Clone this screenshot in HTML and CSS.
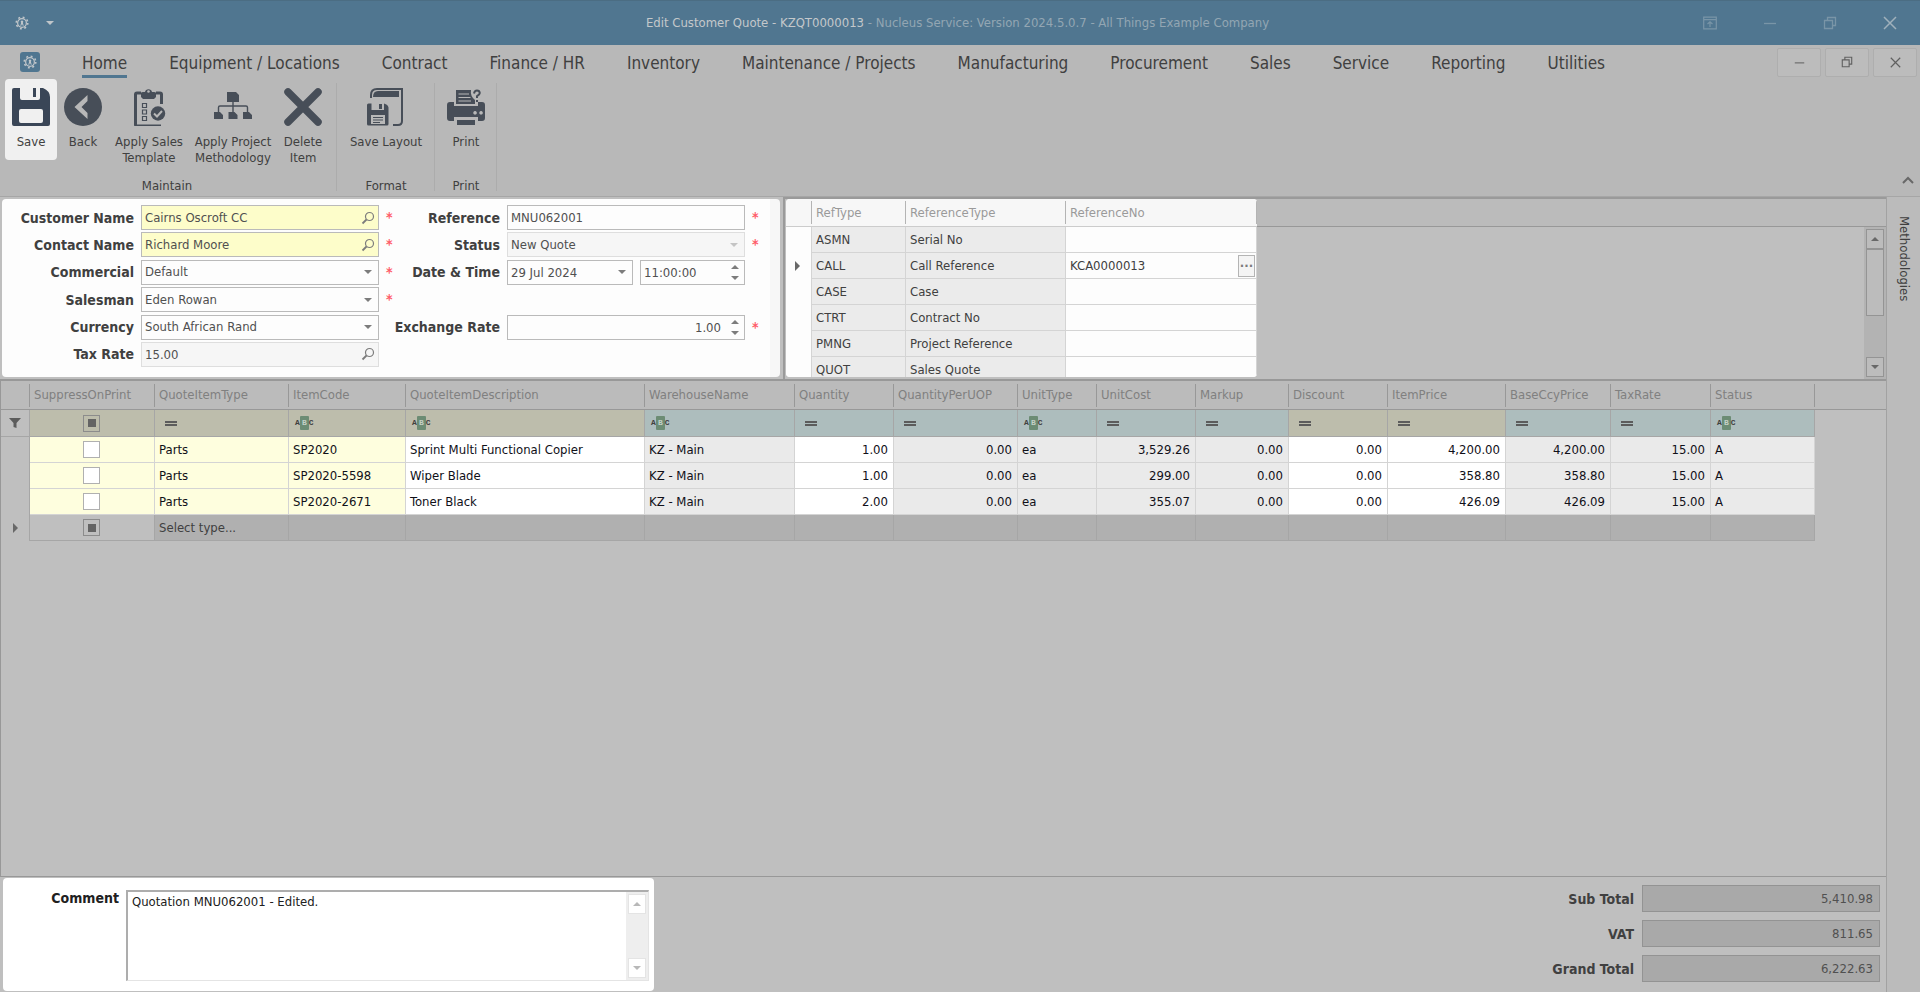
FILE: index.html
```html
<!DOCTYPE html>
<html lang="en">
<head>
  <meta charset="UTF-8">
  <meta name="viewport" content="width=device-width, initial-scale=1.0">
  <title>Edit Customer Quote - KZQT0000013</title>
  <link rel="stylesheet" href="styles.css">
</head>
<body>
  <svg class="defs" width="0" height="0" aria-hidden="true">
    <symbol id="gear" viewBox="0 0 16 16">
      <circle cx="8" cy="8" r="5" fill="none" stroke="currentColor" stroke-width="1.4"/>
      <circle cx="8" cy="8" r="6.6" fill="none" stroke="currentColor" stroke-width="1.8" stroke-dasharray="2.2 2.98"/>
      <path d="M8 5a1.5 1.5 0 0 1 1 2.6L10 11H9L8 9l-1 2H6l1-3.4A1.5 1.5 0 0 1 8 5z" fill="currentColor"/>
    </symbol>
    <symbol id="search" viewBox="0 0 14 14">
      <circle cx="8.5" cy="5.5" r="4" fill="none" stroke="currentColor" stroke-width="1.2"/>
      <path d="M5.5 8.5 1.5 12.5" stroke="currentColor" stroke-width="1.8"/>
    </symbol>
    <symbol id="restore" viewBox="0 0 14 14">
      <path d="M1.5 4.5h8v8h-8zM4.5 4.5v-3h8v8h-3" fill="none" stroke="currentColor" stroke-width="1.3"/>
    </symbol>
    <symbol id="close" viewBox="0 0 14 14">
      <path d="M1 1l12 12M13 1 1 13" stroke="currentColor" stroke-width="1.5"/>
    </symbol>
    <symbol id="minimize" viewBox="0 0 14 14">
      <path d="M1 7.5h12" stroke="currentColor" stroke-width="1.3"/>
    </symbol>
  </svg>

  <header class="titlebar">
    <div class="quick">
      <svg width="14" height="14"><use href="#gear"/></svg>
      <i class="down"></i>
    </div>
    <div class="title"><b>Edit Customer Quote - KZQT0000013</b> - Nucleus Service: Version 2024.5.0.7 - All Things Example Company</div>
    <div class="winbtns">
      <button aria-label="Ribbon display"><svg width="14" height="14" viewBox="0 0 14 14"><path d="M.7 1.2h12.6v11.6H.7zM.7 3.7h12.6M7 11V6M4.5 8 7 5.7 9.500 8" fill="none" stroke="currentColor" stroke-width="1.2"/></svg></button>
      <button aria-label="Minimize"><svg width="14" height="14"><use href="#minimize"/></svg></button>
      <button aria-label="Restore"><svg width="14" height="14"><use href="#restore"/></svg></button>
      <button class="bright" aria-label="Close"><svg width="14" height="14"><use href="#close"/></svg></button>
    </div>
  </header>

  <nav class="menu">
    <span class="app"><svg width="14" height="14"><use href="#gear"/></svg></span>
    <a href="#" class="active">Home</a>
    <a href="#">Equipment / Locations</a>
    <a href="#">Contract</a>
    <a href="#">Finance / HR</a>
    <a href="#">Inventory</a>
    <a href="#">Maintenance / Projects</a>
    <a href="#">Manufacturing</a>
    <a href="#">Procurement</a>
    <a href="#">Sales</a>
    <a href="#">Service</a>
    <a href="#">Reporting</a>
    <a href="#">Utilities</a>
    <div class="docbtns">
      <button aria-label="Minimize document"><svg width="11" height="11"><use href="#minimize"/></svg></button>
      <button aria-label="Restore document"><svg width="12" height="12"><use href="#restore"/></svg></button>
      <button aria-label="Close document"><svg width="11" height="11"><use href="#close"/></svg></button>
    </div>
  </nav>

  <div class="ribbon">
    <section class="group">
      <div class="tools">
        <button class="tool lit">
          <svg width="38" height="38" viewBox="0 0 38 38"><path fill="currentColor" fill-rule="evenodd" d="M2 0h6v10q0 2 2 2h16q2 0 2-2V0h3q7 3 7 9v27q0 2-2 2H2q-2 0-2-2V2q0-2 2-2zM9 21q-2 0-2 2v10q0 2 2 2h20q2 0 2-2V23q0-2-2-2zM21 0h3v9h-3z"/></svg>
          Save
        </button>
        <button class="tool">
          <svg width="38" height="38" viewBox="0 0 38 38"><circle cx="19" cy="19" r="19" fill="currentColor"/><path d="M23.500 7v6l-6 6 6 6v6L10.500 19z" fill="#b8b8b8"/></svg>
          Back
        </button>
        <button class="tool wide">
          <svg width="38" height="38" viewBox="0 0 38 38"><path d="M11 5H7q-1.500 0-1.500 1.500v30q0 1.500 1.500 1.500h24M26 5h4q1.500 0 1.500 1.500V16" fill="none" stroke="currentColor" stroke-width="3"/><path d="M11 9V5q0-1 2-1h2a3.600 3.600 0 0 1 7 0h2q2 0 2 1v4l-2 2H13z" fill="currentColor"/><circle cx="18.500" cy="3.500" r="1.300" fill="#b8b8b8"/><path d="M12.500 15.500h4v4h-4zM12.500 22h4v4h-4zM12.500 28.500h4v4h-4z" fill="none" stroke="currentColor" stroke-width="1.200"/><circle cx="28" cy="25.500" r="7.200" fill="currentColor"/><path d="M24 25.500l3 3 5-5.500" fill="none" stroke="#b8b8b8" stroke-width="2"/></svg>
          Apply Sales<br>Template
        </button>
        <button class="tool wider">
          <svg width="40" height="38" viewBox="0 0 40 38"><path d="M14 4h9l3 3v7H14zM1 24h6l3 3v4H1zM15.500 24h6l3 3v4h-9zM30 24h6l3 3v4h-9z" fill="currentColor"/><path d="M20 14v10M5.500 24v-4.500q0-1.500 1.500-1.500h26q1.500 0 1.500 1.500V24" fill="none" stroke="currentColor" stroke-width="1.400"/></svg>
          Apply Project<br>Methodology
        </button>
        <button class="tool">
          <svg width="38" height="38" viewBox="0 0 38 38"><path d="M4 4l30 30M34 4 4 34" stroke="currentColor" stroke-width="7.500" stroke-linecap="round"/></svg>
          Delete<br>Item
        </button>
      </div>
      <h2>Maintain</h2>
    </section>
    <section class="group">
      <div class="tools">
        <button class="tool wider">
          <svg width="38" height="38" viewBox="0 0 38 38"><path d="M4 10V7q0-6 6-6h25v32q0 4-4 4h-5" fill="none" stroke="currentColor" stroke-width="2"/><path d="M6 9q0-6 5-6h21v6z" fill="currentColor"/><path fill="currentColor" fill-rule="evenodd" d="M1.500 15.500h3V22H17v-6.500q4 1 4.500 4V36q0 1.500-1.500 1.500H1.500Q0 37.500 0 36V17q0-1.500 1.500-1.500zM12 16h3v5h-3zM4 27v9h14v-9z"/><path d="M6 29.500h10M6 32h10M6 34.500h7" stroke="currentColor" stroke-width="1.100"/></svg>
          Save Layout
        </button>
      </div>
      <h2>Format</h2>
    </section>
    <section class="group">
      <div class="tools">
        <button class="tool">
          <svg width="38" height="38" viewBox="0 0 38 38"><path d="M9 2h15q-1 6 4 10v4H9z" fill="currentColor"/><path d="M11.500 6H22M11.500 9.500h12M11.500 13H24" stroke="#b8b8b8" stroke-width="1"/><path fill="currentColor" fill-rule="evenodd" d="M3 14h4v4h24v-4h4q3 0 3 3v13q0 3-3 3h-4v-4H7v4H3q-3 0-3-3V17q0-3 3-3zM28 23a1.800 1.800 0 1 0 .1 0zM34 23a1.800 1.800 0 1 0 .1 0z"/><path d="M10 32h18v5H10z" fill="currentColor"/><path d="M27 5.500q.5-3 3-3t2.800 2.500q0 1.500-2.800 3.200V10M30 12v2" fill="none" stroke="currentColor" stroke-width="2"/></svg>
          Print
        </button>
      </div>
      <h2>Print</h2>
    </section>
    <button class="collapse" aria-label="Collapse ribbon"><svg width="12" height="8" viewBox="0 0 12 8"><path d="M1 7l5-5 5 5" fill="none" stroke="currentColor" stroke-width="2"/></svg></button>
  </div>

  <main class="workspace">
    <div class="content">
      <div class="upper">
        <form class="details">
          <label for="customer">Customer Name</label>
          <div class="field key"><input id="customer" value="Cairns Oscroft CC"><svg width="14" height="14"><use href="#search"/></svg></div>
          <span class="req">*</span>
          <label for="reference">Reference</label>
          <div class="field"><input id="reference" value="MNU062001"></div>
          <span class="req">*</span>

          <label for="contact">Contact Name</label>
          <div class="field key"><input id="contact" value="Richard Moore"><svg width="14" height="14"><use href="#search"/></svg></div>
          <span class="req">*</span>
          <label for="status">Status</label>
          <div class="field off"><select id="status" disabled><option>New Quote</option></select><i class="down"></i></div>
          <span class="req">*</span>

          <label for="commercial">Commercial</label>
          <div class="field"><select id="commercial"><option>Default</option></select><i class="down"></i></div>
          <span class="req">*</span>
          <label for="date">Date &amp; Time</label>
          <div class="pair">
            <div class="field date"><input id="date" value="29 Jul 2024"><i class="down"></i></div>
            <div class="field"><input aria-label="Time" value="11:00:00"><span class="spin"><i class="up"></i><i class="down"></i></span></div>
          </div>
          <span></span>

          <label for="salesman">Salesman</label>
          <div class="field"><select id="salesman"><option>Eden Rowan</option></select><i class="down"></i></div>
          <span class="req">*</span>
          <span></span><span></span><span></span>

          <label for="currency">Currency</label>
          <div class="field"><select id="currency"><option>South African Rand</option></select><i class="down"></i></div>
          <span></span>
          <label for="rate">Exchange Rate</label>
          <div class="field"><input id="rate" class="num" value="1.00"><span class="spin"><i class="up"></i><i class="down"></i></span></div>
          <span class="req">*</span>

          <label for="tax">Tax Rate</label>
          <div class="field off"><input id="tax" value="15.00" readonly><svg width="14" height="14"><use href="#search"/></svg></div>
        </form>

        <div class="refs">
          <div class="refgrid">
            <table class="reftable">
              <colgroup><col class="r0"><col class="r1"><col class="r2"><col class="r3"></colgroup>
              <thead>
                <tr><th></th><th>RefType</th><th>ReferenceType</th><th>ReferenceNo</th></tr>
              </thead>
              <tbody>
                <tr><td></td><td>ASMN</td><td>Serial No</td><td></td></tr>
                <tr><td><i class="right"></i></td><td>CALL</td><td>Call Reference</td><td><div class="lookup">KCA0000013<button aria-label="Browse">···</button></div></td></tr>
                <tr><td></td><td>CASE</td><td>Case</td><td></td></tr>
                <tr><td></td><td>CTRT</td><td>Contract No</td><td></td></tr>
                <tr><td></td><td>PMNG</td><td>Project Reference</td><td></td></tr>
                <tr><td></td><td>QUOT</td><td>Sales Quote</td><td></td></tr>
              </tbody>
            </table>
          </div>
          <div class="refside">
            <div class="headfill"></div>
            <div class="scroll">
              <button aria-label="Scroll up"><i class="up"></i></button>
              <span class="thumb"></span>
              <span class="track"></span>
              <button aria-label="Scroll down"><i class="down"></i></button>
            </div>
          </div>
        </div>
      </div>

      <div class="items">
        <table class="quote">
          <colgroup>
            <col class="c0"><col class="c1"><col class="c2"><col class="c3"><col class="c4"><col class="c5"><col class="c6"><col class="c7">
            <col class="c8"><col class="c9"><col class="c10"><col class="c11"><col class="c12"><col class="c13"><col class="c14"><col class="c15"><col>
          </colgroup>
          <thead>
            <tr>
              <th></th><th>SuppressOnPrint</th><th>QuoteItemType</th><th>ItemCode</th><th>QuoteItemDescription</th><th>WarehouseName</th><th>Quantity</th><th>QuantityPerUOP</th>
              <th>UnitType</th><th>UnitCost</th><th>Markup</th><th>Discount</th><th>ItemPrice</th><th>BaseCcyPrice</th><th>TaxRate</th><th>Status</th><th></th>
            </tr>
          </thead>
          <tbody>
            <tr class="filter">
              <td><svg width="12" height="12" viewBox="0 0 12 12"><path d="M0 1h12L7.500 6v5l-3-1V6z" fill="currentColor"/></svg></td>
              <td class="y mid"><span class="mixed"></span></td>
              <td class="y"><i class="eq"></i></td>
              <td class="y"><span class="abc">A<b>B</b>C</span></td>
              <td class="y"><span class="abc">A<b>B</b>C</span></td>
              <td><span class="abc">A<b>B</b>C</span></td>
              <td><i class="eq"></i></td>
              <td><i class="eq"></i></td>
              <td><span class="abc">A<b>B</b>C</span></td>
              <td><i class="eq"></i></td>
              <td><i class="eq"></i></td>
              <td class="y"><i class="eq"></i></td>
              <td class="y"><i class="eq"></i></td>
              <td><i class="eq"></i></td>
              <td><i class="eq"></i></td>
              <td><span class="abc">A<b>B</b>C</span></td>
              <td></td>
            </tr>
            <tr class="row">
              <td></td><td class="y mid"><input type="checkbox" aria-label="Suppress SP2020"></td><td class="y">Parts</td><td class="y">SP2020</td><td class="w">Sprint Multi Functional Copier</td><td>KZ - Main</td><td class="w n">1.00</td><td class="n">0.00</td>
              <td>ea</td><td class="n">3,529.26</td><td class="n">0.00</td><td class="w n">0.00</td><td class="w n">4,200.00</td><td class="n">4,200.00</td><td class="n">15.00</td><td>A</td><td></td>
            </tr>
            <tr class="row">
              <td></td><td class="y mid"><input type="checkbox" aria-label="Suppress SP2020-5598"></td><td class="y">Parts</td><td class="y">SP2020-5598</td><td class="w">Wiper Blade</td><td>KZ - Main</td><td class="w n">1.00</td><td class="n">0.00</td>
              <td>ea</td><td class="n">299.00</td><td class="n">0.00</td><td class="w n">0.00</td><td class="w n">358.80</td><td class="n">358.80</td><td class="n">15.00</td><td>A</td><td></td>
            </tr>
            <tr class="row">
              <td></td><td class="y mid"><input type="checkbox" aria-label="Suppress SP2020-2671"></td><td class="y">Parts</td><td class="y">SP2020-2671</td><td class="w">Toner Black</td><td>KZ - Main</td><td class="w n">2.00</td><td class="n">0.00</td>
              <td>ea</td><td class="n">355.07</td><td class="n">0.00</td><td class="w n">0.00</td><td class="w n">426.09</td><td class="n">426.09</td><td class="n">15.00</td><td>A</td><td></td>
            </tr>
            <tr class="new">
              <td><i class="right"></i></td><td class="mid"><span class="mixed"></span></td><td>Select type...</td><td></td><td></td><td></td><td></td><td></td>
              <td></td><td></td><td></td><td></td><td></td><td></td><td></td><td></td><td></td>
            </tr>
          </tbody>
        </table>
      </div>

      <footer class="lower">
        <div class="comment">
          <label for="comment">Comment</label>
          <div class="memo">
            <textarea id="comment">Quotation MNU062001 - Edited.</textarea>
            <div class="scroll pale">
              <button aria-label="Scroll comment up"><i class="up"></i></button>
              <span class="track"></span>
              <button aria-label="Scroll comment down"><i class="down"></i></button>
            </div>
          </div>
        </div>
        <div class="totals">
          <label for="sub">Sub Total</label><input id="sub" value="5,410.98" readonly>
          <label for="vat">VAT</label><input id="vat" value="811.65" readonly>
          <label for="grand">Grand Total</label><input id="grand" value="6,222.63" readonly>
        </div>
      </footer>
    </div>
    <aside class="dock"><a href="#">Methodologies</a></aside>
  </main>
</body>
</html>
```
FILE: styles.css
```css
* {
  box-sizing: border-box;
}

body {
  margin: 0;
  height: 100vh;
  display: flex;
  flex-direction: column;
  overflow: hidden;
  background: #bfbfbf;
  color: #404040;
  font-family: Tahoma, "DejaVu Sans Condensed", "Noto Sans", sans-serif;
  font-size: 13px;
  line-height: 16px;
}

button, input, select, textarea {
  font: inherit;
  color: inherit;
  margin: 0;
  padding: 0;
  border: none;
  border-radius: 0;
  background: none;
  outline: none;
}

a {
  color: inherit;
  text-decoration: none;
}

label {
  font-size: 14px;
  font-weight: bold;
  white-space: nowrap;
}

svg {
  flex: none;
}

.defs {
  position: absolute;
}

/* small arrows */
.down, .up, .right {
  flex: none;
  display: inline-block;
  width: 0;
  height: 0;
  border: 4px solid transparent;
}

.down {
  border-top-color: currentColor;
  border-bottom: none;
}

.up {
  border-bottom-color: currentColor;
  border-top: none;
}

.right {
  border-width: 5px;
  border-left-color: #686868;
  border-right: none;
}

/* title bar */
.titlebar {
  flex: none;
  display: flex;
  align-items: center;
  height: 45px;
  background: #507690;
  border-top: 1px solid #4b6d83;
  color: #93a6b3;
}

.quick {
  flex: 1;
  display: flex;
  align-items: center;
  gap: 17px;
  padding-left: 15px;
  color: #c0c6ca;
}

.title {
  padding-right: 20px;
  white-space: nowrap;
}

.title b {
  font-weight: normal;
  color: #c4c8cb;
}

.winbtns {
  flex: 1;
  display: flex;
  justify-content: flex-end;
  color: #7995a7;
}

.winbtns button {
  width: 60px;
  height: 44px;
  display: flex;
  align-items: center;
  justify-content: center;
}

.winbtns .bright {
  color: #a0b1bc;
}

/* menu */
.menu {
  flex: none;
  display: flex;
  align-items: center;
  gap: 42px;
  height: 34px;
  padding: 0 3px 0 20px;
  background: #b8b8b8;
  font-size: 17px;
}

.menu a {
  height: 32px;
  line-height: 34px;
  white-space: nowrap;
}

.menu .active {
  border-bottom: 3px solid #507690;
}

.app {
  display: flex;
  align-items: center;
  justify-content: center;
  width: 20px;
  height: 20px;
  border-radius: 3px;
  background: #507690;
  color: #c0c6ca;
}

.docbtns {
  margin-left: auto;
  display: flex;
  gap: 4px;
}

.docbtns button {
  width: 44px;
  height: 29px;
  display: flex;
  align-items: center;
  justify-content: center;
  background: #bcbcbc;
  border: 1px solid #aeaeae;
  border-radius: 2px;
  color: #606060;
}

/* ribbon */
.ribbon {
  flex: none;
  display: flex;
  height: 118px;
  padding-left: 5px;
  background: #b8b8b8;
  border-bottom: 1px solid #a6a6a6;
}

.group {
  display: flex;
  flex-direction: column;
  justify-content: space-between;
  padding: 0 5px 2px;
  background: linear-gradient(#acacac, #acacac) right 4px / 1px 108px no-repeat;
}

.group:first-child {
  padding: 0 8px 2px 0;
}

.group h2 {
  margin: 0;
  font-size: 13px;
  font-weight: normal;
  text-align: center;
}

.tools {
  display: flex;
}

.tool {
  display: flex;
  flex-direction: column;
  align-items: center;
  width: 52px;
  height: 81px;
  padding-top: 9px;
  white-space: nowrap;
}

.tool svg {
  color: #474e58;
  margin-bottom: 8px;
}

.tool.wide {
  width: 80px;
}

.tool.wider {
  width: 88px;
}

.tool.lit {
  background: #f0f0f0;
  border-radius: 4px;
}

.tool.lit svg {
  color: #3a4657;
}

.collapse {
  align-self: flex-end;
  margin: 0 6px 8px auto;
  color: #686868;
}

/* workspace */
.workspace {
  flex: 1;
  display: flex;
  min-height: 0;
}

.content {
  flex: 1;
  min-width: 0;
  display: flex;
  flex-direction: column;
}

.dock {
  width: 34px;
  padding-top: 19px;
  display: flex;
  justify-content: center;
  background: #bbbbbb;
  border-left: 1px solid #a2a2a2;
}

.dock a {
  writing-mode: vertical-rl;
}

.upper {
  flex: none;
  display: flex;
  height: 182px;
}

.details {
  flex: none;
  width: 778px;
  margin: 2px 3px 2px 2px;
  padding: 6px 0 10px 14px;
  display: grid;
  grid-template-columns: 118px 238px 10px 97px 238px 10px;
  grid-auto-rows: 25px;
  column-gap: 7px;
  align-content: space-between;
  align-items: center;
  background: linear-gradient(#f7f7f7, #f7f7f7) right / 10px 100% no-repeat #fdfdfd;
  border-radius: 4px;
}

.details label {
  justify-self: end;
}

.field {
  display: flex;
  align-items: center;
  height: 25px;
  min-width: 0;
  padding: 0 3px;
  background: #fdfdfd;
  border: 1px solid #bababa;
  color: #505050;
}

.field input, .field select {
  flex: 1;
  min-width: 0;
  height: 100%;
  appearance: none;
  opacity: 1;
}

.field svg {
  color: #7c7c7c;
}

.field > .down {
  margin-right: 3px;
  color: #7c7c7c;
}

.field.key {
  background: #fdfdca;
}

.field.off {
  background: #f6f6f6;
  border-color: #dedede;
}

.field.off .down {
  color: #c4c4c4;
}

.field .num {
  text-align: right;
}

.pair {
  display: flex;
  gap: 7px;
}

.pair .field {
  flex: 1;
}

.pair .date {
  flex: none;
  width: 126px;
}

.spin {
  display: flex;
  flex-direction: column;
  gap: 7px;
  padding: 0 2px 0 10px;
  color: #7c7c7c;
}

.req {
  align-self: start;
  color: #ff5c68;
  font-size: 14px;
  font-weight: bold;
  line-height: 24px;
}

/* references grid */
.refs {
  flex: 1;
  min-width: 0;
  display: flex;
  border: solid #9a9a9a;
  border-width: 2px 0 0 2px;
}

.refgrid {
  flex: none;
  width: 471px;
  margin: 0 0 2px 1px;
  overflow: hidden;
  background: #fdfdfd;
  border-radius: 4px;
}

table {
  table-layout: fixed;
  border-collapse: separate;
  border-spacing: 0;
}

th, td {
  padding: 0 5px 0 4px;
  font-weight: normal;
  text-align: left;
  white-space: nowrap;
}

.reftable {
  width: 471px;
}

.r0 { width: 26px; }
.r1 { width: 94px; }
.r2 { width: 160px; }
.r3 { width: 191px; }

.reftable th {
  height: 28px;
  background: linear-gradient(#b4b4b4, #b4b4b4) right center / 1px 23px no-repeat #f7f7f7;
  border-bottom: 1px solid #cccccc;
  color: #9a9a9a;
}

.reftable td {
  height: 26px;
  background: #ebebeb;
  border-right: 1px solid #d4d4d4;
  border-bottom: 1px solid #d4d4d4;
}

.reftable td:first-child {
  padding: 0 0 0 9px;
  background: #fdfdfd;
  border-bottom: none;
  line-height: 10px;
}

.reftable td:last-child {
  padding-right: 1px;
  background: #fdfdfd;
}

.lookup {
  display: flex;
  align-items: center;
  justify-content: space-between;
}

.lookup button {
  width: 17px;
  height: 22px;
  background: #f4f4f4;
  border: 1px solid #b4b4b4;
  font-weight: bold;
  color: #7c7c7c;
}

.refside {
  flex: 1;
  display: flex;
  flex-direction: column;
}

.headfill {
  height: 28px;
  background: #bbbbbb;
  border-bottom: 1px solid #989898;
}

.scroll {
  flex: 1;
  align-self: flex-end;
  display: flex;
  flex-direction: column;
  width: 22px;
  padding: 2px;
  background: #b3b3b3;
  color: #686868;
}

.scroll button {
  height: 20px;
  display: flex;
  align-items: center;
  justify-content: center;
  background: #bcbcbc;
  border: 1px solid #949494;
}

.thumb {
  height: 67px;
  background: #bcbcbc;
  border: 1px solid #949494;
}

.track {
  flex: 1;
}

/* quote items */
.items {
  flex: 1;
  min-height: 0;
  overflow: hidden;
  border: solid #989898;
  border-width: 2px 0 1px 1px;
}

.quote {
  width: 100%;
}

.c0 { width: 29px; }
.c1 { width: 125px; }
.c2 { width: 134px; }
.c3 { width: 117px; }
.c4 { width: 239px; }
.c5 { width: 150px; }
.c6 { width: 99px; }
.c7 { width: 124px; }
.c8 { width: 79px; }
.c9 { width: 99px; }
.c10 { width: 93px; }
.c11 { width: 99px; }
.c12 { width: 118px; }
.c13 { width: 105px; }
.c14 { width: 100px; }
.c15 { width: 104px; }

.quote th {
  height: 29px;
  background: linear-gradient(#989898, #989898) right center / 1px 23px no-repeat #bbbbbb;
  border-bottom: 1px solid #989898;
  color: #808080;
}

.quote th:last-child {
  background: #bbbbbb;
}

.quote td {
  height: 26px;
  border-right: 1px solid #a6a6a6;
  border-bottom: 1px solid #a6a6a6;
}

.quote td:first-child {
  padding: 0;
  border-bottom: none;
  color: #5c5c5c;
  text-align: center;
  line-height: 10px;
}

.quote tr td:last-child {
  background: none;
  border: none;
}

.quote .mid {
  text-align: center;
  line-height: 10px;
}

.quote .n {
  text-align: right;
}

.quote .filter td {
  height: 27px;
  background: #adbdbd;
}

.quote .filter td:first-child {
  background: none;
  border-bottom: 1px solid #a6a6a6;
}

.quote .filter td:last-child {
  background: none;
}

.quote .filter .y {
  background: #bdbdac;
}

.row td {
  background: #eaeaea;
  border-color: #d4d4d4;
  color: #101018;
}

.row td:first-child {
  background: none;
  border-right-color: #a6a6a6;
}

.row .y {
  background: #fefede;
}

.row .w {
  background: #ffffff;
}

.new td {
  background: #b0b0b0;
}

.new td:first-child, .new .mid {
  background: none;
}

.row input {
  width: 17px;
  height: 17px;
  appearance: none;
  background: #ffffff;
  border: 1px solid #b0b0b0;
  vertical-align: middle;
}

.mixed {
  display: inline-block;
  width: 17px;
  height: 17px;
  border: 1px solid #8c8c8c;
  background: linear-gradient(#646464, #646464) center / 8px 8px no-repeat;
  vertical-align: middle;
}

.eq {
  display: block;
  width: 12px;
  height: 5px;
  margin-left: 6px;
  border: solid #5c5c5c;
  border-width: 2px 0;
}

.abc {
  display: flex;
  align-items: center;
  padding-left: 2px;
  font: bold 8px/14px "Liberation Mono", monospace;
}

.abc b {
  width: 9px;
  text-align: center;
  background: #6c8c74;
  border-radius: 1px;
  color: #c4d0c6;
}

/* comment and totals */
.lower {
  flex: none;
  display: flex;
  justify-content: space-between;
  padding: 1px 6px 1px 3px;
}

.comment {
  display: flex;
  gap: 7px;
  width: 651px;
  padding: 12px 5px 10px 0;
  background: #ffffff;
  border-radius: 4px;
}

.comment label {
  width: 116px;
  text-align: right;
  color: #202020;
}

.memo {
  flex: 1;
  display: flex;
  border: 1px solid #e4e4e4;
  border-top: 2px solid #adadad;
  border-left: 2px solid #adadad;
}

.memo textarea {
  flex: 1;
  padding: 2px 4px;
  resize: none;
  color: #202020;
}

.scroll.pale {
  flex: none;
  align-self: stretch;
  background: #eeeeee;
  color: #b8b8b8;
}

.pale button {
  background: #ffffff;
  border-color: #e4e4e4;
}

.totals {
  display: grid;
  grid-template-columns: auto 238px;
  grid-auto-rows: 27px;
  gap: 8px;
  align-items: center;
  padding: 7px 0 9px;
}

.totals label {
  text-align: right;
}

.totals input {
  height: 27px;
  padding: 0 6px;
  text-align: right;
  background: #a9a9a9;
  border: 1px solid #939393;
  color: #505050;
}
```
